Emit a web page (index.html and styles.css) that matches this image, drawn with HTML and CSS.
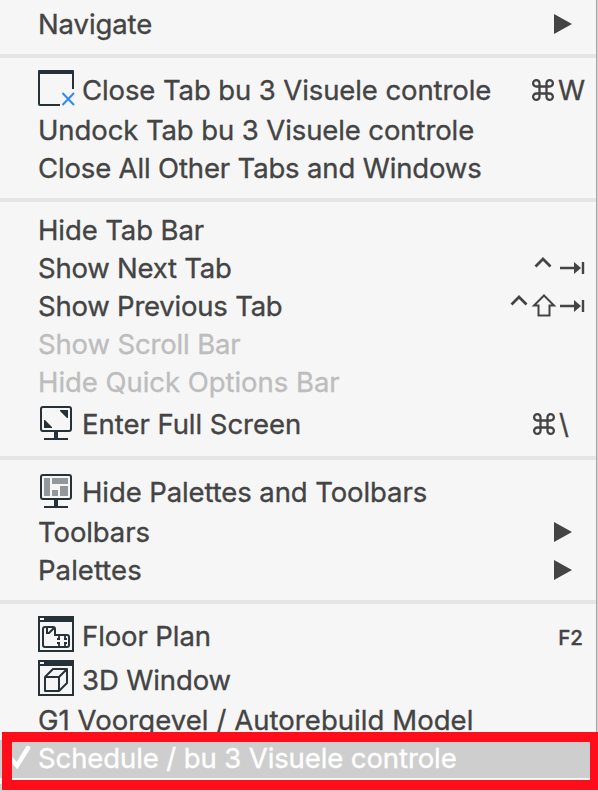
FILE: index.html
```html
<!DOCTYPE html>
<html lang="en">
<head>
    <meta charset="UTF-8">
    <title>Window Menu</title>
    <link rel="stylesheet" href="styles.css">
</head>
<body>
    <div class="menu">
        <div class="item"><span class="label">Navigate</span><span class="arrow"></span></div>
        <div class="separator"></div>

        <div class="item with-icon">
            <svg class="icon" width="38" height="38" viewBox="0 0 38 38">
                <path d="M36 20V3H2v32q0 1 1 1h20" fill="none" stroke="#263238" stroke-width="2"/>
                <path d="M1 5V2q0-1 1-1h34q1 0 1 1v3z" fill="#263238"/>
                <path d="M25.500 24l11.500 12M37 24L25.500 36" stroke="#2f86ff" stroke-width="2"/>
            </svg>
            <span class="label">Close Tab bu 3 Visuele controle</span>
            <span class="shortcut">
                <svg class="command" width="24" height="24" viewBox="0 0 24 24"><use href="#command"/></svg>
                <span class="key-w">W</span>
            </span>
        </div>
        <div class="item"><span class="label">Undock Tab bu 3 Visuele controle</span></div>
        <div class="item"><span class="label tight">Close All Other Tabs and Windows</span></div>
        <div class="separator"></div>

        <div class="item"><span class="label">Hide Tab Bar</span></div>
        <div class="item">
            <span class="label tighter">Show Next Tab</span>
            <span class="shortcut">
                <svg width="52" height="28" viewBox="24 0 52 28"><use href="#control" x="24"/><use href="#tab"/></svg>
            </span>
        </div>
        <div class="item">
            <span class="label tighter">Show Previous Tab</span>
            <span class="shortcut">
                <svg width="76" height="28" viewBox="0 0 76 28">
                    <use href="#control"/>
                    <path d="M34 3.500L44 13.500H39.500V23.500H28.500V13.500H24z" fill="none" stroke="#444" stroke-width="2"/>
                    <use href="#tab"/>
                </svg>
            </span>
        </div>
        <div class="item disabled"><span class="label tight">Show Scroll Bar</span></div>
        <div class="item disabled"><span class="label loose">Hide Quick Options Bar</span></div>
        <div class="item with-icon">
            <svg class="icon" width="38" height="38" viewBox="0 0 38 38">
                <use href="#monitor"/>
                <path d="M23 7h8v8h-1l-7-7zM7 17h1l7 7v1H7z" fill="#263238"/>
            </svg>
            <span class="label loose">Enter Full Screen</span>
            <span class="shortcut">
                <svg class="command" width="24" height="24" viewBox="0 0 24 24"><use href="#command"/></svg>
                <span class="key-slash">\</span>
            </span>
        </div>
        <div class="separator"></div>

        <div class="item with-icon">
            <svg class="icon" width="38" height="38" viewBox="0 0 38 38">
                <use href="#monitor"/>
                <path d="M7 7h6v18H7zM15 7h16v6H15zM23 15h8v10h-8zM15 19h6v6h-6z" fill="#92989b"/>
            </svg>
            <span class="label">Hide Palettes and Toolbars</span>
        </div>
        <div class="item"><span class="label">Toolbars</span><span class="arrow"></span></div>
        <div class="item"><span class="label looser">Palettes</span><span class="arrow"></span></div>
        <div class="separator"></div>

        <div class="item with-icon">
            <svg class="icon" width="38" height="38" viewBox="0 0 38 38">
                <use href="#window"/>
                <path d="M8 12h8q2 0 2 2v6h12q2 0 2 2v8q0 2-2 2H8q-2 0-2-2V14q0-2 2-2M10 12v6h2l5-5" fill="none" stroke="#263238" stroke-width="2"/>
                <path d="M22 20v4M22 28v4M28 20v4M28 28v4M20 24h3M27 24h3M20 28h3M27 28h3" stroke="#263238" stroke-width="1.800"/>
            </svg>
            <span class="label">Floor Plan</span>
            <span class="shortcut key-f2">F2</span>
        </div>
        <div class="item with-icon">
            <svg class="icon" width="38" height="38" viewBox="0 0 38 38">
                <use href="#window"/>
                <path d="M8 18h14v14H8zl8-8h14l-8 8M30 10v14l-8 8" fill="none" stroke="#263238" stroke-width="2" stroke-linejoin="round"/>
            </svg>
            <span class="label">3D Window</span>
        </div>
        <div class="item"><span class="label looser">G1 Voorgevel / Autorebuild Model</span></div>
        <div class="item selected">
            <svg class="check" width="22" height="26" viewBox="0 0 22 26"><path d="M0 15l6 6.500L17 4" fill="none" stroke="#fff" stroke-width="4.500" stroke-linecap="round"/></svg>
            <span class="label">Schedule / bu 3 Visuele controle</span>
        </div>
    </div>
    <div class="highlight"></div>

    <!-- shared symbols -->
    <svg class="symbols" width="0" height="0">
        <defs>
            <path id="command" d="M8.500 8.500H15.500V15.500H8.500zM8.500 8.500H5.500A3.200 3.200 0 1 1 8.500 5.500zM15.500 8.500V5.500A3.200 3.200 0 1 1 18.500 8.500zM15.500 15.500H18.500A3.200 3.200 0 1 1 15.500 18.500zM8.500 15.500V18.500A3.200 3.200 0 1 1 5.500 15.500z" fill="none" stroke="#444" stroke-width="2.300"/>
            <path id="control" d="M1.500 12.500l7.500-7.500 7.500 7.500" fill="none" stroke="#444" stroke-width="2.800"/>
            <g id="tab">
                <path d="M50 14h15M73 8v12" stroke="#444" stroke-width="2.400"/>
                <path d="M64 8L71 14l-7 6z" fill="#444"/>
            </g>
            <g id="monitor">
                <rect x="4" y="4" width="30" height="24" rx="2" fill="none" stroke="#263238" stroke-width="2"/>
                <path d="M17 28h4v7h-4zM7 35h24v2H7z" fill="#263238"/>
            </g>
            <g id="window">
                <path d="M2 2h34v34H2z" fill="none" stroke="#263238" stroke-width="2"/>
                <path d="M1 1h36v6H1z" fill="#263238"/>
                <path d="M3 3h4v2H3z" fill="#f6f6f6"/>
            </g>
        </defs>
    </svg>
</body>
</html>
```
FILE: styles.css
```css
body {
    margin: 0;
    height: 792px;
    overflow: hidden;
    position: relative;
    background-color: #d2d2d2;
    font-family: Inter, "Liberation Sans", sans-serif;
    font-size: 27.5px;
    color: #444;
    -webkit-text-stroke: 0.35px currentColor;
}
.menu {
    width: 596px;
    height: 779px;
    padding-top: 5px;
    box-sizing: content-box;
    background-color: #f6f6f6;
    border-right: 1px solid #a6a6a6;
}
.item {
    display: flex;
    align-items: center;
    height: 38px;
    padding-left: 38px;
    position: relative;
    white-space: nowrap;
    line-height: 38px;
}
.with-icon {
    height: 44px;
    padding-left: 37px;
}
.with-icon .label,
.with-icon .shortcut {
    padding-top: 2px;
}
.icon {
    flex: none;
    margin-right: 7px;
    margin-bottom: 2px;
}
.separator {
    height: 4px;
    margin: 11px 0 9px;
    background-color: #e5e5e5;
}
.label {
    letter-spacing: -0.1px;
}
.tight {
    letter-spacing: -0.15px;
}
.tighter {
    letter-spacing: -0.22px;
}
.loose {
    letter-spacing: -0.04px;
}
.looser {
    letter-spacing: 0.06px;
}
.shortcut {
    display: flex;
    align-items: center;
    margin-left: auto;
    margin-right: 10px;
}
.key-w {
    margin-left: 3px;
    margin-right: 1px;
}
.key-slash {
    margin-left: 3px;
    margin-right: 17px;
}
.with-icon .key-f2 {
    margin-right: 13px;
    font-size: 20.5px;
    font-weight: 500;
    padding-top: 5px;
}
.arrow {
    margin-left: auto;
    margin-right: 24px;
    border-left: 18px solid #444;
    border-top: 10px solid transparent;
    border-bottom: 10px solid transparent;
}
.disabled {
    color: #bdbdbd;
}
.selected {
    background-color: #cecece;
    color: #fff;
    margin-top: 1px;
}
.selected .label {
    padding-bottom: 2px;
}
.check {
    position: absolute;
    left: 11px;
    top: 4px;
}
/* red frame round the selected entry */
.highlight {
    position: absolute;
    left: 2px;
    top: 732px;
    width: 578px;
    height: 38px;
    border: 10px solid #ff0d1b;
    border-right-width: 8px;
}
.symbols {
    position: absolute;
}
```
